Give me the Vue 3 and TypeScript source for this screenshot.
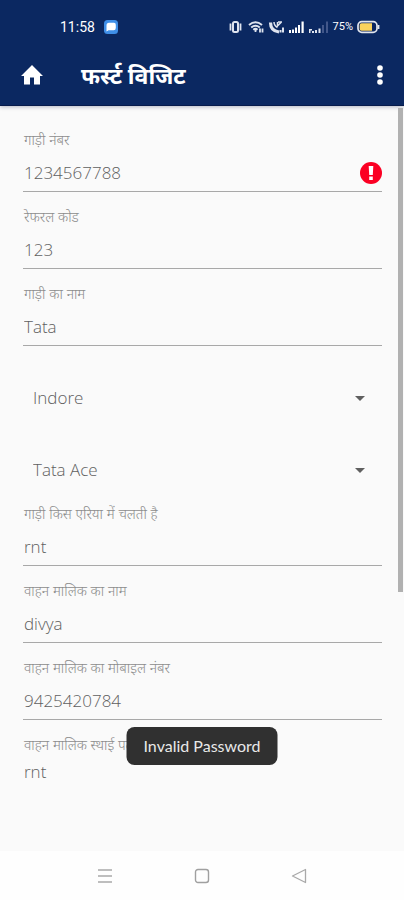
<script setup lang="ts">
import { ref } from 'vue'

interface Field {
  id: string
  label: string
  value: string
  invalid?: boolean
  open?: boolean
}

const vehicleFields = ref<Field[]>([
  { id: 'vehicle-number', label: 'गाड़ी नंबर', value: '1234567788', invalid: true },
  { id: 'referral-code', label: 'रेफरल कोड', value: '123' },
  { id: 'vehicle-name', label: 'गाड़ी का नाम', value: 'Tata' },
])

const ownerFields = ref<Field[]>([
  { id: 'area', label: 'गाड़ी किस एरिया में चलती है', value: 'rnt' },
  { id: 'owner-name', label: 'वाहन मालिक का नाम', value: 'divya' },
  { id: 'owner-mobile', label: 'वाहन मालिक का मोबाइल नंबर', value: '9425420784' },
  { id: 'owner-address', label: 'वाहन मालिक स्थाई पता', value: 'rnt', open: true },
])

const city = ref('Indore')
const model = ref('Tata Ace')
</script>

<template>
  <div class="screen">
    <header class="top">
      <div class="status">
        <span class="clock">11:58</span>
        <svg class="chat" width="14" height="14" viewBox="0 0 14 14" aria-hidden="true">
          <rect width="14" height="14" rx="3.5" fill="#3f8fe8" />
          <path d="M5 2.800h5Q11.800 2.800 11.800 4.800V8q0 2.200-2.200 2.200H4.500L2.500 11.500V5.500Q2.500 2.800 5 2.800Z" fill="#fff" />
        </svg>
        <div class="signals">
          <svg width="16" height="14" viewBox="0 0 16 14" fill="none" stroke="#dfe4ef" aria-hidden="true">
            <rect x="5" y="2" width="5" height="10" rx="1.500" stroke-width="2" />
            <path d="M2.500 3.500v7M12.500 3.500v7" stroke-width="1.800" />
          </svg>
          <svg width="16" height="14" viewBox="0 0 16 14" fill="none" stroke="#dfe4ef" stroke-width="2" aria-hidden="true">
            <path d="M1 5Q7.500-.5 14 5M3.200 7.500Q7.500 4 11.800 7.500M5.300 9.700Q7.500 8 9.500 9.700" />
            <path d="M7.500 10v2M12 8.500v4M14.500 8.500v4" stroke-width="1.800" />
          </svg>
          <svg width="17" height="14" viewBox="0 0 17 14" fill="none" stroke="#dfe4ef" aria-hidden="true">
            <path d="M2.500 2.500Q2.500 11 11 12" stroke-width="3.200" />
            <path d="M6 2q0 3.500 3.500 5.500M9.500 2v4L13 2.500M10 2h4" stroke-width="1.500" />
            <path d="M12.500 12.500V10M15 12.500V7.500" stroke-width="2" />
          </svg>
          <svg width="16" height="14" viewBox="0 0 16 14" fill="#fff" aria-hidden="true">
            <path d="M0 10h2v3H0zM3 9.500h2V13H3zM6 7.500h2V13H6zM9 5h2v8H9zM12.500 1.500h2.200V13h-2.200z" />
          </svg>
          <svg width="20" height="14" viewBox="0 0 20 14" fill="#dfe4ef" aria-hidden="true">
            <path d="M0 9h3v1.500H1.500V13H0zM3 11h2v2H3zM6 10h2v3H6zM9.500 8.500h2V13h-2z" />
            <path d="M13 5h2v8h-2zM17 1.500h2V13h-2z" fill="#42578a" />
          </svg>
          <span class="percent">75%</span>
          <svg width="23" height="14" viewBox="0 0 23 14" aria-hidden="true">
            <rect x="1" y="1.700" width="19" height="10.600" rx="3.800" fill="#0b2560" stroke="#e3e6ee" stroke-width="1.700" />
            <path d="M4.500 3.200H15v7.600H4.500Q2.700 10.800 2.700 9V5Q2.700 3.200 4.500 3.200Z" fill="#fbd35d" />
            <path d="M21.500 5v4" stroke="#e3e6ee" stroke-width="1.800" />
          </svg>
        </div>
      </div>
      <div class="appbar">
        <button type="button" class="icon-button" aria-label="Home">
          <svg width="24" height="24" viewBox="0 0 24 24" fill="#fff" aria-hidden="true">
            <path d="M10 21.500v-7h4v7h6V13H23L12 2 1 13h3v8.500z" />
          </svg>
        </button>
        <h1>फर्स्ट विजिट</h1>
        <button type="button" class="icon-button" aria-label="More options">
          <svg width="24" height="24" viewBox="0 0 24 24" fill="#fff" aria-hidden="true">
            <circle cx="12" cy="5" r="2.800" /><circle cx="12" cy="12" r="2.800" /><circle cx="12" cy="19" r="2.800" />
          </svg>
        </button>
      </div>
    </header>

    <main class="form">
      <div v-for="f in vehicleFields" :key="f.id" class="field">
        <label :for="f.id">{{ f.label }}</label>
        <div class="entry">
          <input :id="f.id" v-model="f.value" type="text" :aria-invalid="f.invalid" />
          <svg v-if="f.invalid" width="22" height="22" viewBox="0 0 22 22" aria-hidden="true">
            <circle cx="11" cy="11" r="11" fill="#fb0023" />
            <path d="M8.700 4h4.600l-.5 9H9.200zM9.200 14.500h3.600V18H9.200z" fill="#fff" />
          </svg>
        </div>
      </div>

      <div class="selects">
        <div class="picker">
          <select v-model="city" aria-label="City"><option>Indore</option></select>
          <svg width="10" height="5" viewBox="0 0 10 5" aria-hidden="true"><path d="M0 0h10L5 5z" fill="#5f5f5f" /></svg>
        </div>
        <div class="picker">
          <select v-model="model" aria-label="Vehicle model"><option>Tata Ace</option></select>
          <svg width="10" height="5" viewBox="0 0 10 5" aria-hidden="true"><path d="M0 0h10L5 5z" fill="#5f5f5f" /></svg>
        </div>
      </div>

      <div v-for="f in ownerFields" :key="f.id" class="field" :class="{ open: f.open }">
        <label :for="f.id">{{ f.label }}</label>
        <div class="entry">
          <input :id="f.id" v-model="f.value" type="text" />
        </div>
      </div>
      <div class="thumb"></div>
    </main>

    <div class="toast" role="status">Invalid Password</div>

    <nav class="system">
      <button type="button" aria-label="Recent apps">
        <svg width="16" height="16" viewBox="0 0 16 16" stroke="#a9a9a9" stroke-width="1.500" aria-hidden="true"><path d="M1 2h14M1 8h14M1 14h14" /></svg>
      </button>
      <button type="button" aria-label="Home screen">
        <svg width="16" height="16" viewBox="0 0 16 16" fill="none" stroke="#a0a0a0" stroke-width="1.400" aria-hidden="true"><rect x="1.500" y="1.500" width="13" height="13" rx="2.500" /></svg>
      </button>
      <button type="button" aria-label="Back">
        <svg width="16" height="16" viewBox="0 0 16 16" fill="none" stroke="#a9a9a9" stroke-width="1.300" stroke-linejoin="round" aria-hidden="true"><path d="M14.500 1.500v13L1.500 8z" /></svg>
      </button>
    </nav>
  </div>
</template>

<style>
body {
  margin: 0;
}
</style>

<style scoped>
.screen {
  position: relative;
  box-sizing: border-box;
  display: flex;
  flex-direction: column;
  min-height: 100vh;
  background: #fafafa;
  color: #707070;
  font-family: Lato, 'Noto Sans', 'Noto Sans Devanagari', sans-serif;
}
button {
  display: flex;
  padding: 0;
  border: 0;
  background: none;
}
.top {
  background: #0b2861;
  color: #fff;
  border-bottom: 1px solid #071b4b;
  box-shadow: 0 1px 4px rgba(20, 30, 70, 0.3);
}
.status {
  display: flex;
  align-items: center;
  height: 44px;
  padding: 9px 24px 0 60px;
  box-sizing: border-box;
}
.clock {
  font: 400 14px/16px Roboto, sans-serif;
}
.chat {
  margin-left: 9px;
}
.signals {
  display: flex;
  align-items: center;
  gap: 4px;
  margin-left: auto;
}
.percent {
  font: 400 11px/14px Roboto, sans-serif;
}
.appbar {
  display: flex;
  align-items: center;
  height: 61px;
  padding: 0 12px 0 20px;
}
h1 {
  flex: 1;
  margin: 0 0 0 37px;
  font-size: 23px;
  line-height: 32px;
  font-weight: 700;
}
.form {
  position: relative;
  flex: 1;
  padding: 9px 22px 40px 23px;
}
.field {
  padding-top: 15px;
}
label {
  display: block;
  padding-left: 1px;
  font-size: 14px;
  line-height: 20px;
  font-weight: 300;
  color: #8c8c8c;
}
.entry {
  display: flex;
  align-items: center;
  height: 42px;
  padding-top: 4px;
  box-sizing: border-box;
  border-bottom: 1px solid #a8a8a8;
}
input,
select {
  flex: 1;
  min-width: 0;
  padding: 0 1px;
  border: 0;
  outline: 0;
  background: none;
  color: #606060;
  font: 300 17px/24px 'Open Sans', sans-serif;
}
.open .entry {
  height: 34px;
  padding: 0;
  border: 0;
}
.selects {
  display: flex;
  flex-direction: column;
  gap: 34px;
  padding-top: 33px;
}
.picker {
  display: flex;
  align-items: center;
  height: 38px;
  padding: 0 17px 0 9px;
}
select {
  appearance: none;
}
.thumb {
  position: absolute;
  top: 2px;
  right: 1px;
  width: 5px;
  height: 65%;
  background: #b1b1b1;
}
.toast {
  position: absolute;
  left: 50%;
  bottom: 135px;
  transform: translateX(-50%);
  padding: 9px 17px;
  border-radius: 8px;
  background: #303030;
  color: #e8e8e8;
  font-size: 16px;
  line-height: 20px;
  white-space: nowrap;
}
.system {
  display: flex;
  align-items: center;
  justify-content: center;
  gap: 81px;
  height: 49px;
  background: #fefefe;
}
</style>
